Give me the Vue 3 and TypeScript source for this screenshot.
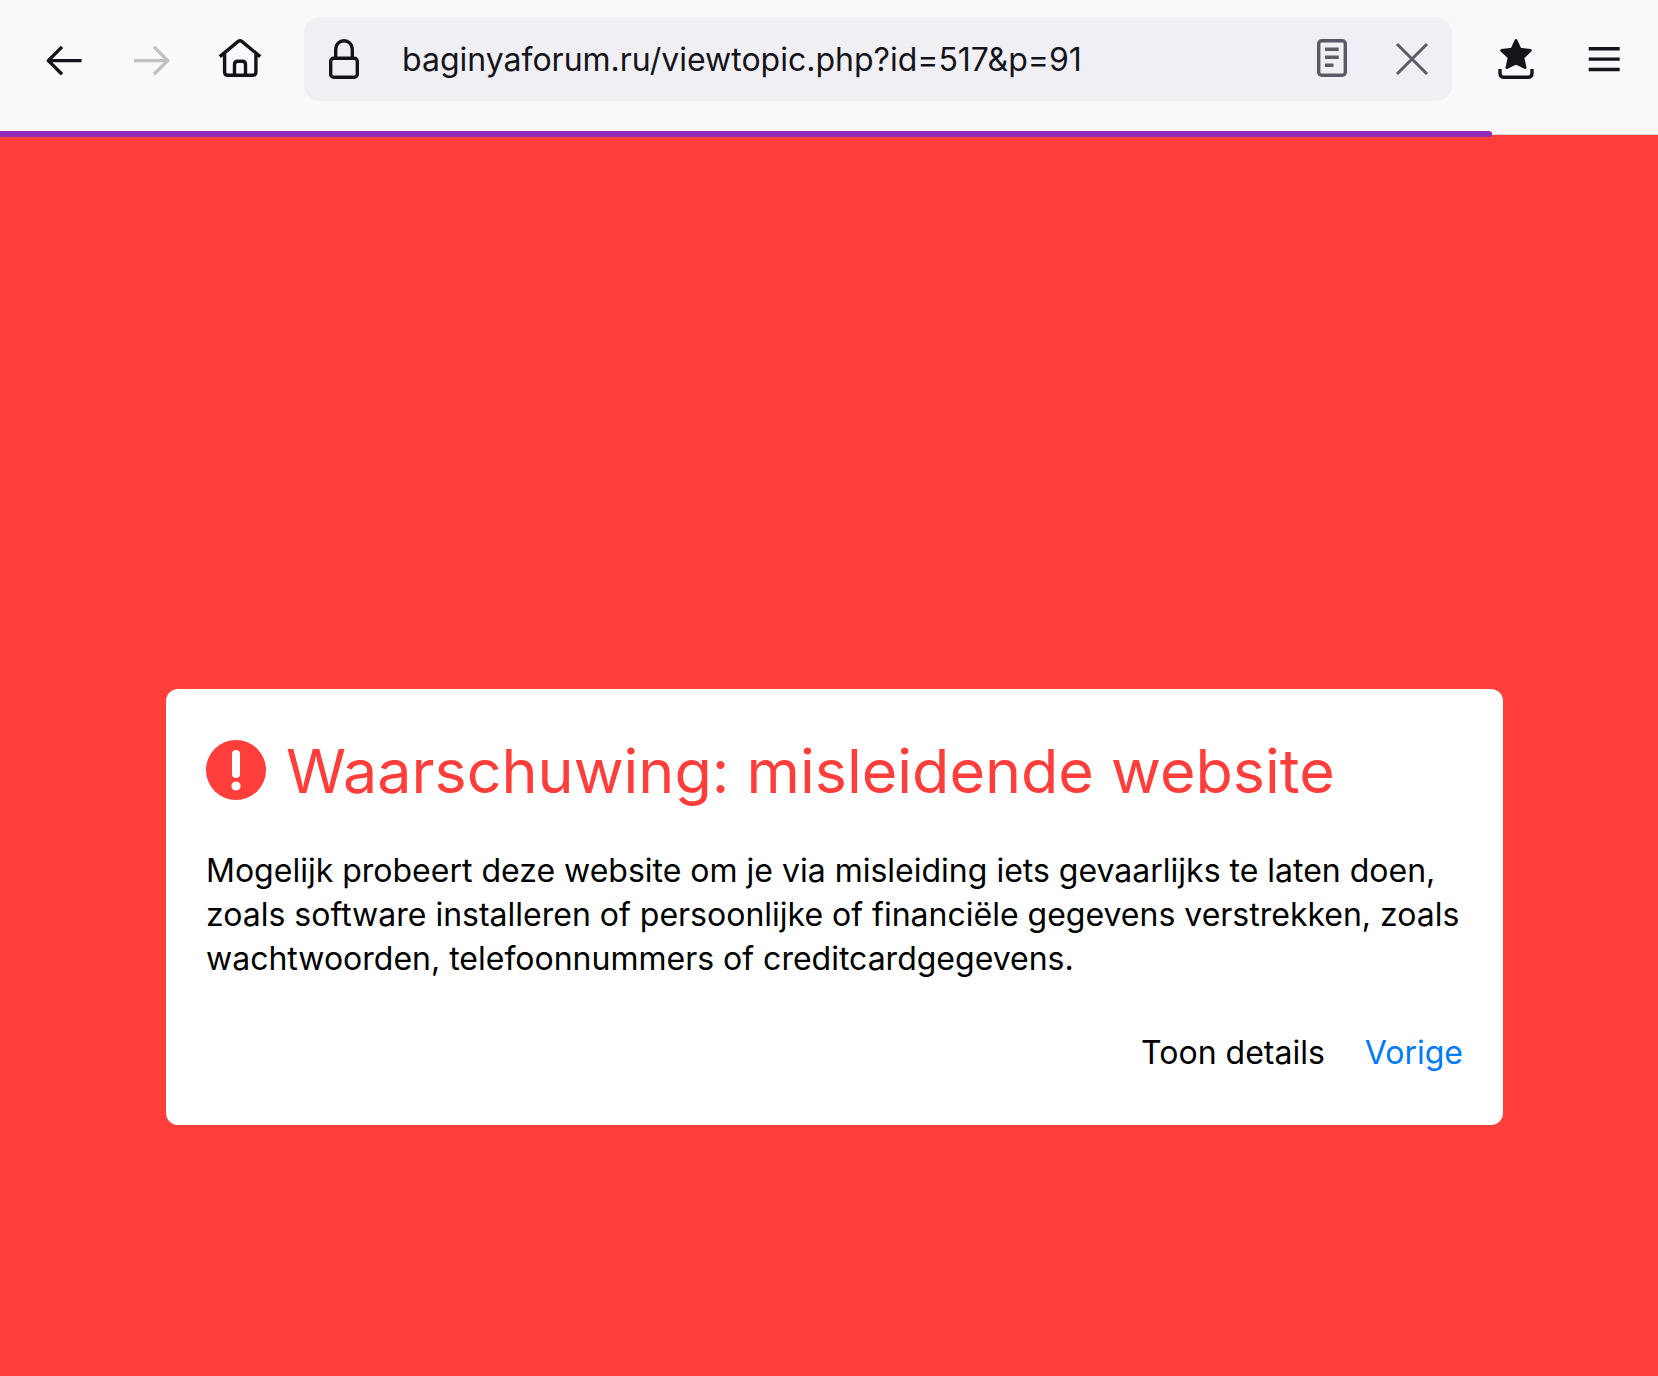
<script setup lang="ts">
import { ref } from 'vue'

const url = ref('baginyaforum.ru/viewtopic.php?id=517&p=91')
const progress = ref(90)
</script>

<template>
  <div class="browser">
    <header class="toolbar">
      <nav class="group" aria-label="Navigatie">
        <button type="button" class="tool" aria-label="Terug">
          <svg viewBox="0 0 48 48"><path d="M41.6 25.6H8.5M22 11.9 8.3 25.6 22 39.3" /></svg>
        </button>
        <button type="button" class="tool" aria-label="Vooruit" disabled>
          <svg viewBox="0 0 48 48"><path d="M6 25.6H39.5M26 11.9 39.7 25.6 26 39.3" /></svg>
        </button>
        <button type="button" class="tool" aria-label="Startpagina">
          <svg viewBox="0 0 48 48">
            <path d="M3.8 21.6 22.2 6.4Q24 5 25.8 6.4L44.2 21.6M8.6 18V37Q8.6 40.3 11.9 40.3H36.6Q39.9 40.3 39.9 37V18M18.5 40V29.5Q18.5 26.3 21.7 26.3H26.3Q29.5 26.3 29.5 29.5V40" />
          </svg>
        </button>
      </nav>

      <form class="address" @submit.prevent>
        <button type="button" class="inner" aria-label="Beveiliging">
          <svg viewBox="0 0 48 48">
            <rect x="10.7" y="23.3" width="26.6" height="19" rx="3" />
            <path d="M15.7 23V14A8.3 8.3 0 0 1 32.3 14V23" />
          </svg>
        </button>
        <input v-model="url" class="url" type="text" aria-label="Adres" spellcheck="false" />
        <button type="button" class="inner muted" aria-label="Lezerweergave">
          <svg viewBox="0 0 48 48">
            <rect x="10.7" y="5.7" width="26.6" height="34.6" rx="3" />
            <path d="M17 14.2H30.7M17 22.2H30.7M17 30.2H25.5" />
          </svg>
        </button>
        <button type="button" class="inner muted" aria-label="Stoppen">
          <svg viewBox="0 0 48 48"><path class="thin" d="M9 9 39 39M39 9 9 39" /></svg>
        </button>
      </form>

      <div class="group">
        <button type="button" class="tool" aria-label="Bladwijzers">
          <svg viewBox="0 0 48 48">
            <path class="solid" d="M24 5.5 28 14.3 38.3 15.5 30.8 22.5 33 32.5 24 27.8 15 32.5 17.2 22.5 9.7 15.5 20 14.3Z" />
            <path d="M8 34V38Q8 42.3 12.3 42.3H35.7Q40 42.3 40 38V34" />
          </svg>
        </button>
        <button type="button" class="tool" aria-label="Menu">
          <svg viewBox="0 0 48 48"><path d="M8.7 13.7H39.7M8.7 24.1H39.7M8.7 34.5H39.7" /></svg>
        </button>
      </div>

      <div class="progress" :style="{ width: progress + '%' }"></div>
    </header>

    <main class="page">
      <section class="card">
        <div class="heading">
          <svg class="alert" viewBox="0 0 60 60" aria-hidden="true">
            <circle cx="30" cy="30" r="30" fill="#ff3d3a" />
            <rect x="26" y="10" width="8" height="28" rx="4" fill="#fff" />
            <circle cx="30" cy="46" r="4.6" fill="#fff" />
          </svg>
          <h1>Waarschuwing: misleidende website</h1>
        </div>
        <p>
          Mogelijk probeert deze website om je via misleiding iets gevaarlijks te laten doen,
          zoals software installeren of persoonlijke of financiële gegevens verstrekken, zoals
          wachtwoorden, telefoonnummers of creditcardgegevens.
        </p>
        <div class="actions">
          <button type="button" class="action">Toon details</button>
          <button type="button" class="action primary">Vorige</button>
        </div>
      </section>
    </main>
  </div>
</template>

<style>
body {
  background: #ff3d3a;
}
</style>

<style scoped>
.browser {
  display: flex;
  flex-direction: column;
  min-height: 100vh;
  font-family: Inter, "Liberation Sans", sans-serif;
}

button,
input {
  padding: 0;
  border: 0;
  background: none;
  font: inherit;
  color: inherit;
}

.toolbar {
  position: relative;
  display: flex;
  align-items: center;
  gap: 20px;
  padding: 17px 10px 33px 20px;
  border-bottom: 1px solid #d5d5da;
  background: #f9f9fb;
  color: #15141a;
}

.group {
  display: flex;
}

.tool {
  display: flex;
  align-items: center;
  justify-content: center;
  width: 88px;
  height: 84px;
}

.tool:disabled {
  color: #c1c1c4;
}

.toolbar svg {
  width: 48px;
  height: 48px;
  fill: none;
  stroke: currentColor;
  stroke-width: 3.4;
  stroke-linejoin: round;
}

.toolbar .thin {
  stroke-width: 3;
}

.toolbar .solid {
  fill: currentColor;
  stroke-width: 3;
}

.address {
  display: flex;
  flex: 1;
  min-width: 0;
  height: 84px;
  border-radius: 16px;
  background: #f0eff4;
}

.inner {
  display: flex;
  flex: none;
  align-items: center;
  justify-content: center;
  width: 80px;
}

.muted {
  color: #5b5b66;
}

.url {
  flex: 1;
  min-width: 0;
  padding-left: 18px;
  outline: 0;
  font-size: 32px;
}

.progress {
  position: absolute;
  bottom: -3px;
  left: 0;
  height: 6px;
  border-radius: 0 3px 3px 0;
  background: #952bb9;
}

.page {
  flex: 1;
  padding: 554px 155px 40px 166px;
  background: #ff3d3a;
}

.card {
  padding: 40px 40px 50px;
  border-radius: 12px;
  background: #fff;
}

.heading {
  display: flex;
  align-items: center;
  gap: 20px;
}

.alert {
  flex: none;
  width: 60px;
  height: 60px;
}

h1 {
  margin: 0;
  padding-top: 2px;
  color: #ff3d3a;
  font-size: 61px;
  font-weight: 400;
  line-height: 80px;
}

p {
  margin: 38px 0 50px;
  color: #000;
  font-size: 32px;
  line-height: 44px;
}

.actions {
  display: flex;
  justify-content: flex-end;
  gap: 40px;
}

.action {
  color: #000;
  font-size: 32px;
  line-height: 44px;
}

.primary {
  color: #007aff;
}
</style>
